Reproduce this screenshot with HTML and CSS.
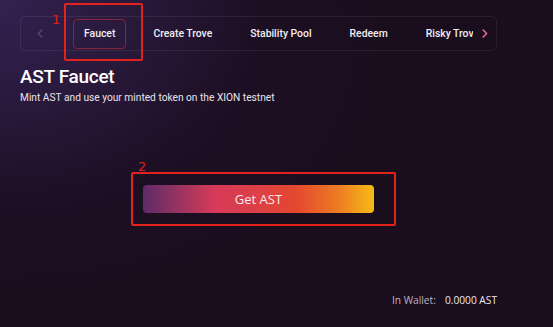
FILE: index.html
```html
<!DOCTYPE html>
<html lang="en">
<head>
<meta charset="utf-8">
<title>AST Faucet</title>
<link rel="stylesheet" href="styles.css">
</head>
<body>
<div class="page">
  <nav class="tabs">
    <button class="arrow arrow-left" aria-label="Previous">
      <svg width="6" height="9" viewBox="0 0 6 9"><path d="M4.8 1 L1.4 4.5 L4.8 8" fill="none" stroke="currentColor" stroke-width="1.4" stroke-linecap="round" stroke-linejoin="round"/></svg>
    </button>
    <div class="track">
      <a class="tab active">Faucet</a>
      <a class="tab">Create Trove</a>
      <a class="tab">Stability Pool</a>
      <a class="tab">Redeem</a>
      <a class="tab">Risky Troves</a>
    </div>
    <button class="arrow arrow-right" aria-label="Next">
      <svg width="6" height="9" viewBox="0 0 6 9"><path d="M1.2 1 L4.6 4.5 L1.2 8" fill="none" stroke="currentColor" stroke-width="1.6" stroke-linecap="round" stroke-linejoin="round"/></svg>
    </button>
  </nav>

  <h1 class="title">AST Faucet</h1>
  <p class="subtitle">Mint AST and use your minted token on the XION testnet</p>

  <div class="action">
    <button class="get-btn">Get AST</button>
  </div>

  <div class="wallet"><span class="wallet-label">In Wallet:</span><span class="wallet-value">0.0000 AST</span></div>

  <div class="mark mark-1"><span class="mark-num">1</span></div>
  <div class="mark mark-2"><span class="mark-num">2</span></div>
</div>
</body>
</html>
```
FILE: styles.css
```css
* { box-sizing: border-box; }
html, body {
  margin: 0;
  height: 100%;
}
body {
  background:
    radial-gradient(ellipse 260px 200px at 0 0, rgba(58, 38, 92, 0.75), rgba(58, 38, 92, 0) 100%),
    radial-gradient(ellipse 420px 260px at 0 60px, rgba(40, 24, 60, 0.5), rgba(40, 24, 60, 0) 100%),
    #1a0d1d;
  font-family: Roboto, "Noto Sans", sans-serif;
  color: #f2eef4;
  overflow: hidden;
}
.page {
  position: relative;
  width: 553px;
  height: 327px;
  padding: 16px 56px 0 20px;
}
.tabs {
  display: flex;
  align-items: center;
  height: 35px;
  border: 1px solid rgba(255, 255, 255, 0.07);
  border-radius: 5px;
}
.arrow {
  flex: none;
  display: flex;
  align-items: center;
  background: none;
  border: 0;
  padding: 0;
  height: 100%;
  cursor: pointer;
}
.arrow-left {
  width: 22px;
  color: #5b4960;
  justify-content: flex-end;
}
.arrow-right {
  width: 23px;
  color: #e26c84;
  justify-content: center;
}
.track {
  flex: 1;
  display: flex;
  align-items: center;
  gap: 16px;
  overflow: hidden;
  padding-left: 30px;
  height: 100%;
}
.tab {
  flex: none;
  display: flex;
  align-items: center;
  height: 30px;
  padding: 0 10px;
  font-size: 10.4px;
  font-weight: 500;
  color: #f1eef3;
  border: 1px solid transparent;
  border-radius: 4px;
  white-space: nowrap;
}
.tab.active {
  border-color: #82283a;
}
.title {
  margin: 14px 0 0;
  font-size: 19px;
  line-height: 24px;
  font-weight: 500;
  letter-spacing: -0.3px;
  color: #ffffff;
}
.subtitle {
  margin: 2px 0 0;
  font-size: 10.2px;
  line-height: 14px;
  color: #e8e3ea;
}
.action {
  display: flex;
  justify-content: center;
  margin-top: 80px;
}
.get-btn {
  width: 231px;
  height: 28px;
  border: 0;
  border-radius: 4px;
  font-family: "Open Sans", sans-serif;
  font-size: 13px;
  color: #fbe9ee;
  background: linear-gradient(90deg, #5e2a68 0%, #8a3262 12%, #d63a58 31%, #dc3f48 48%, #e4472e 66%, #ec7a24 84%, #f6bb14 100%);
  cursor: pointer;
}
.wallet {
  display: flex;
  justify-content: flex-end;
  gap: 9px;
  margin-top: 80px;
  font-family: "Open Sans", sans-serif;
  font-size: 10.2px;
  line-height: 14px;
}
.wallet-label { color: #bdb4c1; }
.wallet-value { color: #ece8ee; }

.mark {
  position: absolute;
  border: 2px solid #e2231c;
  border-radius: 2px;
}
.mark-num {
  position: absolute;
  font-family: "DejaVu Sans", sans-serif;
  font-size: 13px;
  line-height: 13px;
  color: #d8261e;
}
.mark-1 {
  left: 64px;
  top: 3px;
  width: 79px;
  height: 58px;
}
.mark-1 .mark-num { left: -14px; top: 8px; }
.mark-2 {
  left: 131px;
  top: 172px;
  width: 265px;
  height: 54px;
}
.mark-2 .mark-num { left: 5px; top: -14px; }
```
